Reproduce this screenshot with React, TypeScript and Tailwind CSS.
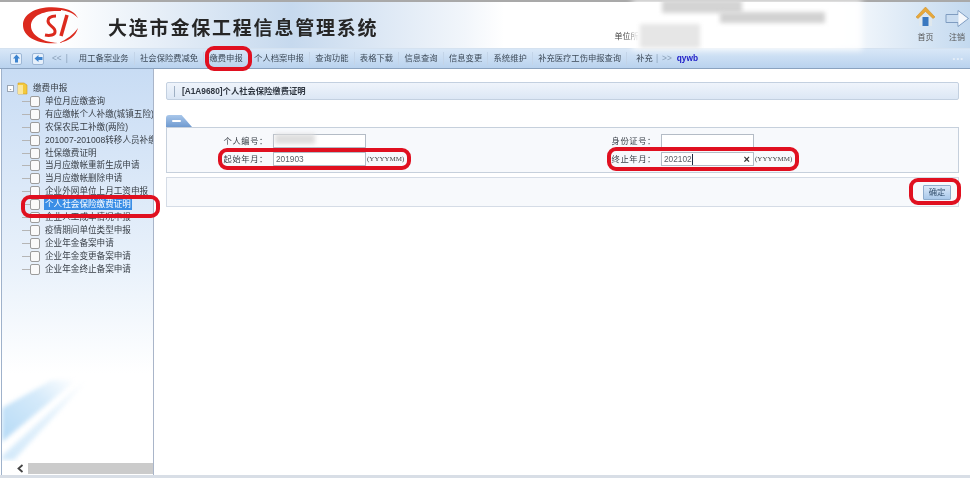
const FONT = "font-['Liberation_Sans','Noto_Sans_CJK_SC',sans-serif]";

const navItems = ['用工备案业务', '社会保险费减免', '缴费申报', '个人档案申报', '查询功能', '表格下载', '信息查询', '信息变更', '系统维护', '补充医疗工伤申报查询'];

const treeItems = [
  '单位月应缴查询',
  '有应缴帐个人补缴(城镇五险)',
  '农保农民工补缴(两险)',
  '201007-201008转移人员补缴',
  '社保缴费证明',
  '当月应缴帐重新生成申请',
  '当月应缴帐删除申请',
  '企业外网单位上月工资申报',
  '个人社会保险缴费证明',
  '企业人工成本情况申报',
  '疫情期间单位类型申报',
  '企业年金备案申请',
  '企业年金变更备案申请',
  '企业年金终止备案申请',
];

function Logo() {
  return (
    <svg width="56" height="37" viewBox="0 0 56 37" fill="#dc2a1e">
      <path d="M38 1C16-2 0 6 0 18c0 12 15 20 35 18C19 35 8 28 8 19 8 9 20 3 38 4z" />
      <path d="M38 1c8 1 14 4 17 10C50 6 45 4 38 3z" />
      <path d="M55 21C53 29 46 34 36 36 44 32 50 28 55 21z" />
      <path d="M33 9c-5 0-8 2-8 5 0 5 8 6 7 11 0 3-5 4-10 3" fill="none" stroke="#dc2a1e" strokeWidth="3" />
      <path d="M44 8L38 29" fill="none" stroke="#dc2a1e" strokeWidth="3.500" />
    </svg>
  );
}

function HomeIcon() {
  return (
    <svg width="19" height="20" viewBox="0 0 19 20">
      <path d="M3 9v10h13V9z" fill="#dfe8ee" />
      <rect x="6.500" y="10" width="6" height="9" fill="#3a78c0" />
      <path d="M0 10L9.500 0 19 10l-2 1.500L9.500 4.500 2 11.500z" fill="#e8a83a" stroke="#c98a20" strokeWidth="0.5" />
    </svg>
  );
}

function ExitIcon() {
  return (
    <svg width="24" height="17" viewBox="0 0 24 17">
      <path d="M1 4.500h12V0.500l10.500 8-10.500 8v-4H1z" fill="#c9dcf0" stroke="#7f9cc0" strokeWidth="1" />
      <path d="M13.500 1.500l9 7-9 7z" fill="#f4f7fb" />
    </svg>
  );
}

function NavIcon({ up }: { up?: boolean }) {
  return (
    <span className="flex h-[12px] w-[12px] items-center justify-center rounded-[2px] border border-[#9db7d6] bg-[#e6f0fb]">
      <svg width="9" height="9" viewBox="0 0 9 9">
        {up ? <path d="M4.500 0.500L8 4.500H6V8.500H3V4.500H1z" fill="#3c83cf" /> : <path d="M0.500 4.500L4.500 1V3H8.500V6H4.500V8z" fill="#3c83cf" />}
      </svg>
    </span>
  );
}

function NavBar() {
  return (
    <nav className="flex h-[21px] items-center border-y border-b-[#8aa2bf] border-t-[#d5e2f0] bg-gradient-to-b from-[#d8e7f7] to-[#b9d2ee] pl-[10px] text-[8.300px] text-[#3d4a58]">
      <NavIcon up />
      <span className="ml-[10px]"><NavIcon /></span>
      <span className="ml-[8px] text-[#8aa0b8]">&lt;&lt;</span>
      <span className="ml-[4px] mr-[11px] text-[#8aa0b8]">|</span>
      {navItems.map((item, i) => (
        <span key={item} className={`whitespace-nowrap ${i === 0 ? 'pr-[5.200px]' : 'border-l border-[#c3d4e8] px-[5.200px]'}`}>
          {item}
        </span>
      ))}
      <span className="border-l border-[#c3d4e8] pl-[9px]">补充</span>
      <span className="ml-[3px] text-[#8aa0b8]">|</span>
      <span className="ml-[4px] text-[#8aa0b8]">&gt;&gt;</span>
      <span className="ml-[5px] font-bold text-[#2020c8]">qywb</span>
      <span className="ml-auto mr-[6px] text-[8px] tracking-[1px] text-[#e6eef8]">•••</span>
    </nav>
  );
}

function TreeRow({ label, active }: { label: string; active?: boolean }) {
  return (
    <li className="flex h-[12.900px] items-center pl-[20px] whitespace-nowrap">
      <span className="h-px w-[8px] shrink-0 bg-[#b5b5b5]" />
      <span className="h-[11px] w-[10px] shrink-0 rounded-[2px] border border-[#9c9c9c] bg-[#fafafa]" />
      <span className={`ml-[4px] px-px leading-[11px] ${active ? 'bg-[#3a8ee6] text-white' : 'text-[#3a4048]'}`}>{label}</span>
    </li>
  );
}

function Sidebar() {
  return (
    <aside className="relative flex w-[153px] shrink-0 flex-col overflow-hidden border-x border-l-[#9fb2cb] border-r-[#a9b5c9] bg-gradient-to-b from-[#c8dcf4] via-[#eaf2fb] via-50% to-white to-75% text-[8.600px]">
      <div className="mt-[13px] flex h-[13px] items-center pl-[5px] text-[#3a4048]">
        <span className="flex h-[7px] w-[7px] items-center justify-center border border-[#9aa5b3] bg-white text-[6px] leading-none">-</span>
        <svg className="ml-[3px]" width="11" height="13" viewBox="0 0 11 13">
          <path d="M1 1h6l3 2v9H1z" fill="#f2c93c" stroke="#d49a1f" strokeWidth="0.6" />
          <path d="M1 3h5v9H1z" fill="#fbe69a" />
        </svg>
        <span className="ml-[5px]">缴费申报</span>
      </div>
      <ul className="flex-1">
        {treeItems.map((t) => (
          <TreeRow key={t} label={t} active={t === '个人社会保险缴费证明'} />
        ))}
      </ul>
      <svg className="absolute bottom-[15px] left-0 blur-[2px]" width="88" height="80" viewBox="0 0 88 80">
        <defs>
          <linearGradient id="streak" x1="0" y1="1" x2="1" y2="0">
            <stop offset="0" stopColor="#b5daf6" />
            <stop offset="0.6" stopColor="#d5eafa" />
            <stop offset="1" stopColor="#ffffff" />
          </linearGradient>
        </defs>
        <path d="M0 28L50 0 74 0 0 62z" fill="url(#streak)" />
        <path d="M0 76L80 2 84 2 12 80H0z" fill="url(#streak)" opacity="0.6" />
      </svg>
      <div className="relative flex h-[14px] items-center bg-white pl-[14px]">
        <svg width="9" height="9" viewBox="0 0 9 9" fill="none" stroke="#444" strokeWidth="1.800">
          <path d="M6.500 1L2.500 4.500 6.500 8" />
        </svg>
        <span className="ml-[3px] h-[11px] flex-1 bg-[#cbcbcb]" />
      </div>
    </aside>
  );
}

function Field({ label, value, unit, clear, caret }: { label: string; value?: string; unit?: boolean; clear?: boolean; caret?: boolean }) {
  return (
    <div className="flex h-[18.500px] items-center">
      <span className="w-[50px] shrink-0 text-right tracking-[0.600px] text-[#3a4048]">{label}</span>
      <div className="relative ml-[5px] flex h-[14px] w-[93px] items-center border border-[#b4bcc6] bg-white pl-[2px] text-[#5a6068]">
        {value}
        {caret && <span className="h-[11px] w-px bg-[#1c2a44]" />}
        {clear && <span className="absolute right-[3px] text-[11px] font-bold leading-none text-[#333]">×</span>}
      </div>
      {unit && <span className="ml-px font-['Liberation_Serif',serif] text-[7px] text-[#444]">(YYYYMM)</span>}
    </div>
  );
}

function MainPanel() {
  return (
    <main className="flex-1 bg-white pb-0 pl-[12px] pr-[10px] pt-[13px] text-[8.300px]">
      <div className="flex h-[18px] items-center rounded-[2px] border border-[#c3d0e0] bg-gradient-to-b from-[#eff4fb] to-[#dce7f5] pl-[7px] font-semibold text-[#2f3640]">
        <span className="mr-[7px] h-[11px] w-px bg-[#9fb0c4]" />
        [A1A9680]个人社会保险缴费证明
      </div>
      <div className="mt-[15px] flex h-[12px] w-[26px] items-center justify-center rounded-tl-[3px] bg-gradient-to-b from-[#a9c7ea] to-[#6f9ad0] [clip-path:polygon(0_0,60%_0,100%_100%,0_100%)]">
        <span className="mr-[6px] h-[2px] w-[9px] rounded-full bg-white" />
      </div>
      <div className="flex h-[46px] flex-col justify-center border border-[#c6d0dc] bg-[#f7f9fc]">
        <div className="flex pl-[51px]">
          <div className="flex w-[388px] flex-col">
            <Field label="个人编号：" />
            <Field label="起始年月：" value="201903" unit />
          </div>
          <div className="flex flex-col">
            <Field label="身份证号：" />
            <Field label="终止年月：" value="202102" unit clear caret />
          </div>
        </div>
      </div>
      <div className="mt-[4px] flex h-[30px] items-center justify-end border border-[#d5dce6] bg-[#f7f9fc] pr-[7px]">
        <button className="h-[15px] w-[28px] rounded-[1px] border border-[#8eaccc] bg-gradient-to-b from-[#dbe9f8] to-[#a9c8ea] text-[8.300px] text-[#33506e]">确定</button>
      </div>
    </main>
  );
}

export default function App() {
  return (
    <div className={`relative flex h-[478px] w-[970px] flex-col overflow-hidden bg-white blur-[0.3px] ${FONT}`}>
      <header className="relative flex h-[48px] items-center border-t-2 border-[#a9a9a9] bg-[linear-gradient(90deg,#ffffff_6%,#c6d9ee_30%,#f2f6fb_48%,#ffffff_52%,#ffffff_85%,#c3d9ef_100%)] pl-[23px]">
        <Logo />
        <h1 className="ml-[29px] mt-[9px] text-[19px] font-bold tracking-[1.800px] text-[#262626]">大连市金保工程信息管理系统</h1>
        <span className="ml-[236px] mt-[24px] text-[8px] text-[#444]">单位所</span>
        <div className="ml-auto mr-[1px] flex gap-[10px] self-end pb-[4px]">
          <div className="flex flex-col items-center text-[8px] text-[#555]">
            <HomeIcon />
            <span className="mt-[5px]">首页</span>
          </div>
          <div className="flex flex-col items-center text-[8px] text-[#555]">
            <span className="mt-[3px]"><ExitIcon /></span>
            <span className="mt-[5px]">注销</span>
          </div>
        </div>
      </header>
      <NavBar />
      <div className="flex flex-1 border-b-[3px] border-[#d8dee6] px-px">
        <Sidebar />
        <MainPanel />
      </div>

      {/* mosaic over the company name */}
      <div className="absolute left-[632px] top-0 h-[50px] w-[230px] bg-white/90 blur-[3px]" />
      <div className="absolute left-[640px] top-[24px] h-[24px] w-[60px] bg-[#e6e6e6] blur-[2px]" />
      <div className="absolute left-[662px] top-0 h-[13px] w-[80px] bg-[#d4d4d4] blur-[2px]" />
      <div className="absolute left-[720px] top-[12px] h-[11px] w-[105px] bg-[#d2d2d2] blur-[2px]" />
      <div className="absolute left-[275px] top-[134px] h-[10px] w-[40px] bg-[#dedede] blur-[2px]" />

      {/* red marks */}
      <div className="absolute left-[205px] top-[46px] h-[25px] w-[47px] rounded-[9px] border-[4px] border-[#e01020]" />
      <div className="absolute left-[21px] top-[195px] h-[23px] w-[139px] rounded-[9px] border-[4px] border-[#e01020]" />
      <div className="absolute left-[218px] top-[148px] h-[22px] w-[193px] rounded-[9px] border-[4px] border-[#e01020]" />
      <div className="absolute left-[607px] top-[147px] h-[24px] w-[192px] rounded-[9px] border-[4px] border-[#e01020]" />
      <div className="absolute left-[909px] top-[178px] h-[27px] w-[52px] rounded-[9px] border-[4px] border-[#e01020]" />
    </div>
  );
}
